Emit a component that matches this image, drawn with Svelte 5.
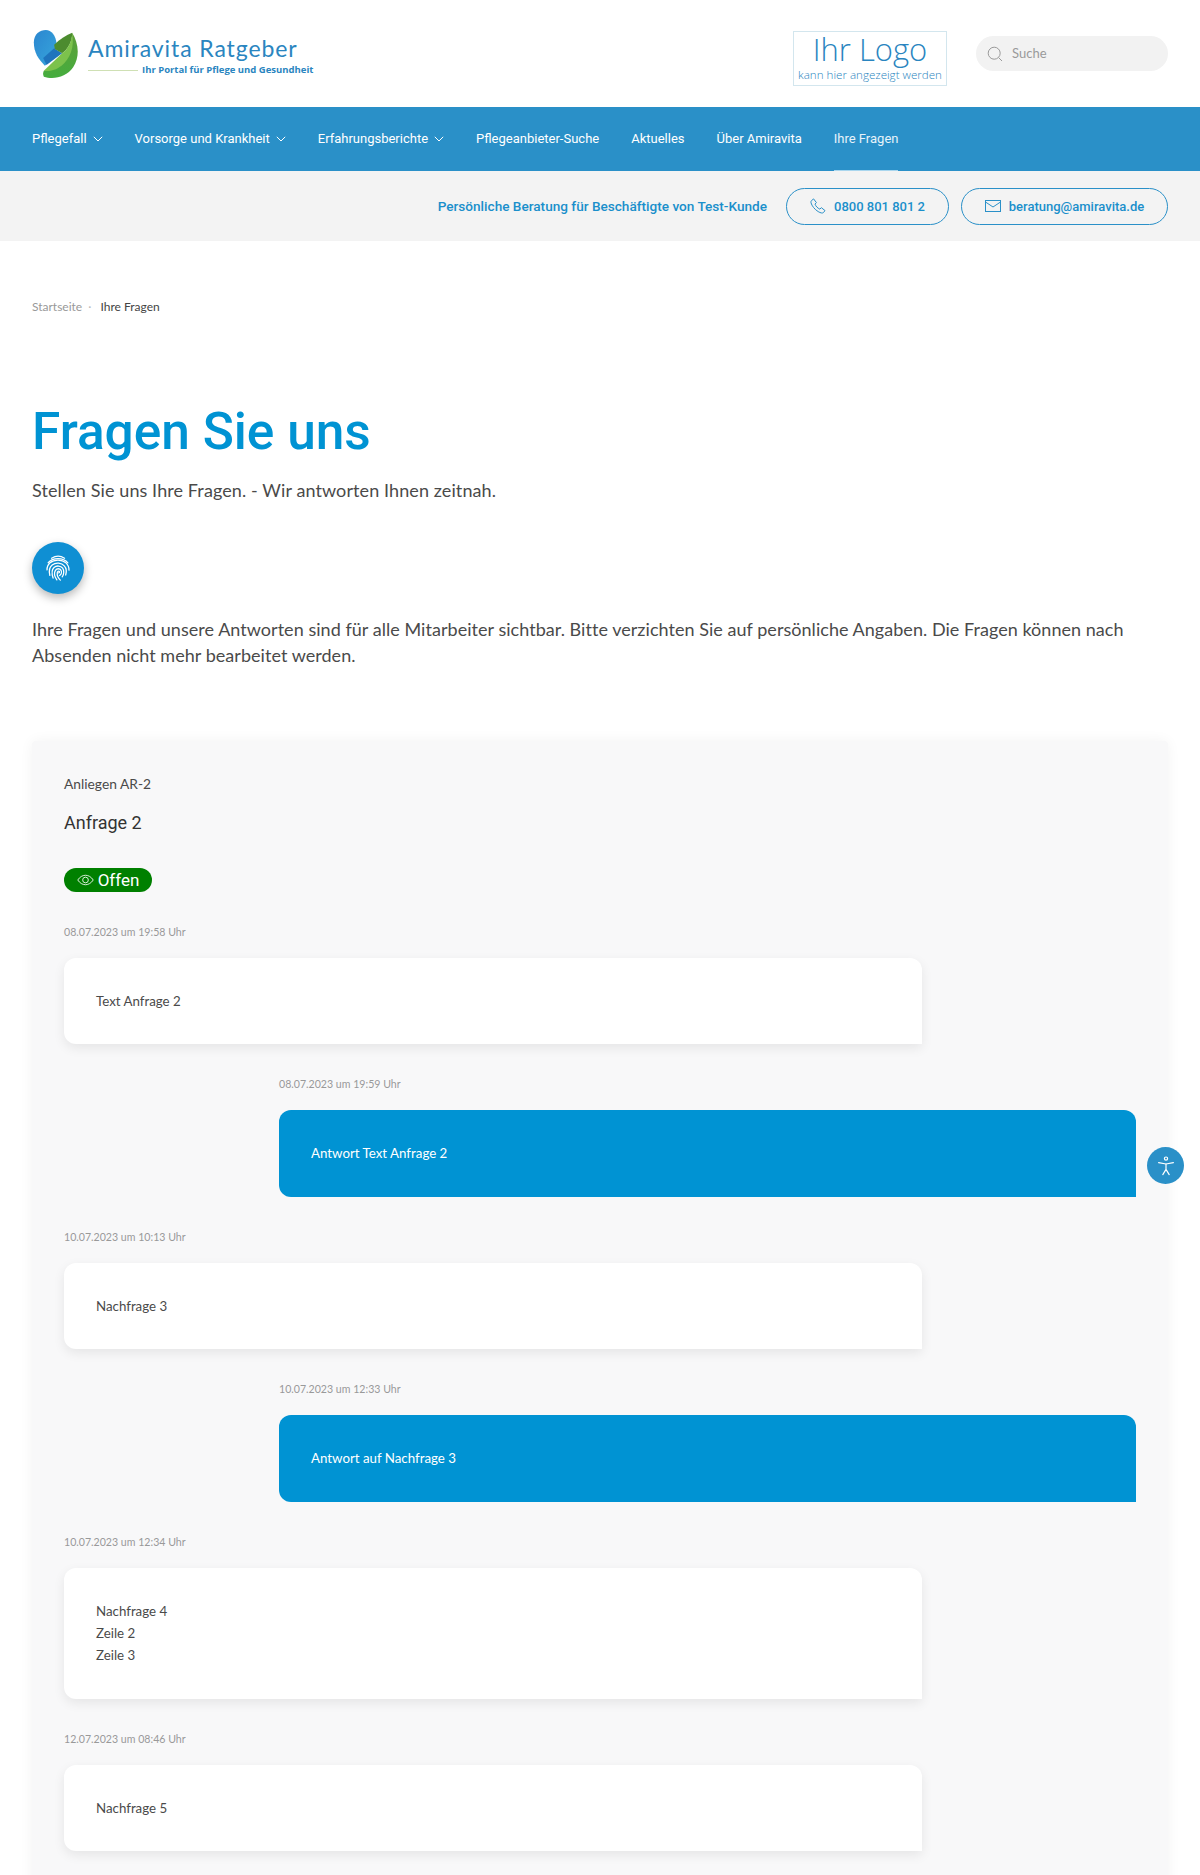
<script lang="ts">
    interface Message {
        date: string;
        lines: string[];
        answer?: boolean;
    }

    const navItems = [
        { label: 'Pflegefall', sub: true },
        { label: 'Vorsorge und Krankheit', sub: true },
        { label: 'Erfahrungsberichte', sub: true },
        { label: 'Pflegeanbieter-Suche' },
        { label: 'Aktuelles' },
        { label: 'Über Amiravita' },
        { label: 'Ihre Fragen', active: true }
    ];

    const messages: Message[] = [
        { date: '08.07.2023 um 19:58 Uhr', lines: ['Text Anfrage 2'] },
        { date: '08.07.2023 um 19:59 Uhr', lines: ['Antwort Text Anfrage 2'], answer: true },
        { date: '10.07.2023 um 10:13 Uhr', lines: ['Nachfrage 3'] },
        { date: '10.07.2023 um 12:33 Uhr', lines: ['Antwort auf Nachfrage 3'], answer: true },
        { date: '10.07.2023 um 12:34 Uhr', lines: ['Nachfrage 4', 'Zeile 2', 'Zeile 3'] },
        { date: '12.07.2023 um 08:46 Uhr', lines: ['Nachfrage 5'] }
    ];
</script>

<header class="top">
    <div class="brand">
        <svg class="brand-mark" viewBox="40 25 140 150" width="47" height="50">
            <defs>
                <linearGradient id="leaf" x1="0" y1="0" x2="0" y2="1">
                    <stop offset="0" stop-color="#5f9e38" />
                    <stop offset="1" stop-color="#45ad3e" />
                </linearGradient>
                <linearGradient id="drop" x1="0" y1="0" x2="1" y2="1">
                    <stop offset="0" stop-color="#2b86d0" />
                    <stop offset="1" stop-color="#37a6dc" />
                </linearGradient>
            </defs>
            <path d="M75 135 C55 115 42 95 42 65 C42 40 60 28 78 28 C95 28 108 45 110 68 L105 85 L78 133 Z" fill="url(#drop)" />
            <path d="M103 83 L127 98 L80 133 L70 112 Z" fill="#1f74bd" />
            <path d="M103 72 C120 55 140 42 157 36 C158 60 145 85 127 98 L105 85 Z" fill="#4c8c2f" />
            <path d="M157 36 C175 65 182 105 160 140 C140 170 100 178 72 168 C68 160 70 155 72 150 C100 145 125 120 135 105 C150 85 157 60 157 36 Z" fill="url(#leaf)" />
            <path d="M127 98 C145 85 157 60 157 36 C165 80 150 115 125 135 C105 150 90 152 72 150 Z" fill="#7cc24c" />
        </svg>
        <div class="brand-text">
            <div class="brand-name">Amiravita Ratgeber</div>
            <div class="brand-sub"><span class="brand-line"></span><span>Ihr Portal für Pflege und Gesundheit</span></div>
        </div>
    </div>
    <div class="top-right">
        <div class="your-logo">
            <div class="your-logo-big">Ihr Logo</div>
            <div class="your-logo-small">kann hier angezeigt werden</div>
        </div>
        <div class="search">
            <svg viewBox="0 0 16 16" width="16" height="16" fill="none" stroke="#9a9a9a" stroke-width="1">
                <circle cx="7.2" cy="7.2" r="6" />
                <path d="M11.6 11.6 L15 15" />
            </svg>
            <span>Suche</span>
        </div>
    </div>
</header>

<nav class="nav">
    {#each navItems as item}
        <div class="nav-item" class:active={item.active}>
            {item.label}
            {#if item.sub}
                <svg viewBox="0 0 10 6" width="10" height="6" fill="none" stroke="#fff" stroke-width="1"><path d="M0.8 0.8 L5 5 L9.2 0.8" /></svg>
            {/if}
        </div>
    {/each}
</nav>

<div class="subbar">
    <span class="subbar-text">Persönliche Beratung für Beschäftigte von Test-Kunde</span>
    <div class="pill phone">
        <svg viewBox="0 0 16 16" width="16" height="16" fill="none" stroke="#2a90c8" stroke-width="1">
            <path d="M1.5 2.6 L3.6 0.9 L6.4 4.6 L5 6.1 C5.6 8 7.6 10.2 9.8 11.1 L11.4 9.7 L15 12.6 L13.4 14.6 C12.4 15.4 10.6 15 8.2 13.6 C4.6 11.4 1.8 7.8 1 4.8 C0.8 3.8 1 3.1 1.5 2.6 Z" />
        </svg>
        0800 801 801 2
    </div>
    <div class="pill mail">
        <svg viewBox="0 0 16 12" width="16" height="12" fill="none" stroke="#2a90c8" stroke-width="1">
            <rect x="0.5" y="0.5" width="15" height="11" />
            <path d="M0.5 2 L8 7 L15.5 2" />
        </svg>
        beratung@amiravita.de
    </div>
</div>

<main class="page">
    <div class="crumbs">
        <span class="crumb-link">Startseite</span>
        <span class="crumb-dot">·</span>
        <span>Ihre Fragen</span>
    </div>

    <h1>Fragen Sie uns</h1>
    <p class="lead">Stellen Sie uns Ihre Fragen. - Wir antworten Ihnen zeitnah.</p>

    <div class="print-btn">
        <svg viewBox="0 0 24 24" width="28" height="28" fill="none" stroke="#fff" stroke-width="1.1" stroke-linecap="round">
            <path d="M6.5 3.6 C10 1.4 14.2 1.4 17.6 3.6" />
            <path d="M3.6 7.4 C7.4 2.8 16.6 2.6 20.4 7.6" />
            <path d="M2.6 13.6 C2.4 8.6 6.6 5.2 12 5.2 C17.4 5.2 21.6 8.8 21.4 13.8" />
            <path d="M5 18.4 C4.2 15 4.4 11.4 7 9.4 C10.2 7 15 7.4 17.4 10.2 C19.2 12.2 19.4 15.4 18.6 18" />
            <path d="M7.8 20.6 C6.6 17 6.4 13.6 8.6 11.6 C10.8 9.6 14.4 10 16 12.2 C17.4 14.2 17.2 17.6 15.6 19.6" />
            <path d="M11 22.2 C9.2 19.6 8.4 16.2 9.8 14 C11 12.2 13.6 12.2 14.6 14 C15.4 15.6 14.8 17.6 13.4 18.4" />
            <path d="M14 22.4 C12.2 20.6 11 18.2 11.4 16 C11.6 14.8 12.6 14.2 13.2 15 C13.6 15.6 13 16.2 12.6 16.2" />
        </svg>
    </div>

    <p class="note">Ihre Fragen und unsere Antworten sind für alle Mitarbeiter sichtbar. Bitte verzichten Sie auf persönliche Angaben. Die Fragen können nach Absenden nicht mehr bearbeitet werden.</p>

    <section class="card">
        <div class="ticket">Anliegen AR-2</div>
        <h2>Anfrage 2</h2>
        <div class="badge">
            <svg viewBox="0 0 18 12" width="17" height="12" fill="none" stroke="#fff" stroke-width="0.9">
                <path d="M0.8 6 C3 2.6 6 1 9 1 C12 1 15 2.6 17.2 6 C15 9.4 12 11 9 11 C6 11 3 9.4 0.8 6 Z" />
                <circle cx="9" cy="6" r="3" />
            </svg>
            Offen
        </div>

        <div class="thread">
            {#each messages as msg}
                <div class="msg" class:answer={msg.answer}>
                    <div class="date">{msg.date}</div>
                    <div class="bubble">
                        {#each msg.lines as line}
                            <div>{line}</div>
                        {/each}
                    </div>
                </div>
            {/each}
        </div>
    </section>
</main>

<div class="a11y">
    <svg viewBox="0 0 24 24" width="24" height="24" fill="none" stroke="#fff" stroke-width="1.2" stroke-linecap="round">
        <circle cx="12" cy="4.6" r="1.6" />
        <path d="M4.6 8.6 L12 10 L19.4 8.6" />
        <path d="M12 10 L12 15.4 M12 15.4 L8.8 20.6 M12 15.4 L15.2 20.6" />
    </svg>
</div>

<style>
    :global(body) {
        margin: 0;
        background: #fff;
        font-family: "Lato", "Open Sans", sans-serif;
        color: #4a4a4a;
    }

    .top {
        height: 107px;
        box-sizing: border-box;
        padding: 0 32px;
        display: flex;
        justify-content: space-between;
        align-items: center;
    }

    .brand {
        display: flex;
        align-items: center;
        gap: 8px;
        padding-left: 1px;
    }

    .brand-text {
        color: #2a85c0;
        padding-top: 3px;
    }

    .brand-name {
        font-size: 23px;
        line-height: 30px;
        letter-spacing: 0.9px;
    }

    .brand-sub {
        display: flex;
        align-items: center;
        gap: 4px;
        font-family: "Open Sans", sans-serif;
        font-size: 9.5px;
        font-weight: 700;
        line-height: 14px;
    }

    .brand-line {
        width: 50px;
        height: 1px;
        background: #cfe0b4;
    }

    .top-right {
        display: flex;
        align-items: center;
        gap: 29px;
    }

    .your-logo {
        width: 152px;
        height: 53px;
        margin-top: 10px;
        border: 1px solid #d3e6ee;
        font-family: "Open Sans", sans-serif;
        font-weight: 300;
        color: #2a85c0;
        text-align: center;
    }

    .your-logo-big {
        font-size: 31px;
        line-height: 34px;
    }

    .your-logo-small {
        font-size: 11.6px;
        line-height: 17px;
    }

    .search {
        width: 192px;
        height: 35px;
        box-sizing: border-box;
        padding: 0 11px;
        background: #f2f2f2;
        border-radius: 18px;
        display: flex;
        align-items: center;
        gap: 9px;
        color: #9a9a9a;
        font-size: 13px;
    }

    .search span {
        margin-top: -1px;
    }

    .nav {
        height: 64px;
        box-sizing: border-box;
        padding: 0 32px;
        background: #2a90c8;
        display: flex;
        gap: 32px;
        font-family: "Roboto", sans-serif;
        font-size: 13px;
        color: #fff;
    }

    .nav-item {
        display: flex;
        align-items: center;
        gap: 6px;
        border-bottom: 1px solid transparent;
    }

    .nav-item.active {
        border-bottom-color: #a9d6ee;
        color: #e6f3fa;
    }

    .subbar {
        height: 70px;
        box-sizing: border-box;
        padding: 0 32px;
        background: #f3f3f3;
        display: flex;
        justify-content: flex-end;
        align-items: center;
        font-family: "Roboto", sans-serif;
        font-size: 13px;
        font-weight: 500;
        color: #1a8fcb;
    }

    .subbar-text {
        margin-right: 19px;
        font-size: 13.6px;
    }

    .pill {
        height: 37px;
        box-sizing: border-box;
        border: 1px solid #2a90c8;
        border-radius: 19px;
        display: flex;
        align-items: center;
        justify-content: center;
        gap: 8px;
    }

    .phone {
        width: 163px;
        margin-right: 12px;
    }

    .mail {
        width: 207px;
    }

    .page {
        padding: 0 32px;
    }

    .crumbs {
        padding-top: 59px;
        font-size: 12px;
        line-height: 14px;
        color: #444;
    }

    .crumb-link {
        color: #999;
    }

    .crumb-dot {
        color: #bbb;
        margin: 0 6px 0 3px;
    }

    h1 {
        margin: 86px 0 0;
        font-family: "Roboto", sans-serif;
        font-size: 51.4px;
        font-weight: 500;
        line-height: 64px;
        color: #0093d3;
    }

    .lead {
        margin: 12px 0 0;
        font-size: 18px;
        line-height: 28px;
        letter-spacing: 0.1px;
    }

    .print-btn {
        width: 52px;
        height: 52px;
        margin-top: 38px;
        border-radius: 50%;
        background: #0f8fd3;
        box-shadow: 0 4px 10px rgba(0, 0, 0, 0.28);
        display: flex;
        align-items: center;
        justify-content: center;
    }

    .note {
        margin: 22px 0 0;
        font-size: 18px;
        line-height: 26px;
        letter-spacing: 0.04px;
    }

    .card {
        margin-top: 73px;
        padding: 32px;
        background: #f8f8f9;
        box-shadow: 0 0 14px rgba(0, 0, 0, 0.05);
        border-radius: 4px;
    }

    .ticket {
        font-size: 13.8px;
        line-height: 22px;
    }

    h2 {
        margin: 16px 0 0;
        font-family: "Roboto", sans-serif;
        font-size: 18px;
        font-weight: 400;
        line-height: 24px;
        color: #333;
    }

    .badge {
        width: 88px;
        height: 24px;
        margin-top: 33px;
        border-radius: 12px;
        background: #008000;
        color: #fff;
        font-family: "Roboto", sans-serif;
        font-size: 17px;
        display: flex;
        align-items: center;
        justify-content: center;
        gap: 4px;
    }

    .thread {
        padding-top: 32px;
    }

    .msg {
        margin-bottom: 32px;
    }

    .msg.answer {
        margin-left: 215px;
    }

    .msg:not(.answer) {
        margin-right: 214px;
    }

    .date {
        font-size: 10.6px;
        line-height: 16px;
        color: #999;
        margin-bottom: 18px;
    }

    .bubble {
        padding: 32px;
        font-size: 13.3px;
        line-height: 22.4px;
        background: #fff;
        border-radius: 12px 12px 0 12px;
        box-shadow: 0 4px 12px rgba(0, 0, 0, 0.08);
    }

    .answer .bubble {
        background: #0093d3;
        color: #fff;
        box-shadow: none;
    }

    .a11y {
        position: fixed;
        left: 1147px;
        top: 1147px;
        width: 37px;
        height: 37px;
        border-radius: 50%;
        background: #2a90c8;
        display: flex;
        align-items: center;
        justify-content: center;
    }
</style>
